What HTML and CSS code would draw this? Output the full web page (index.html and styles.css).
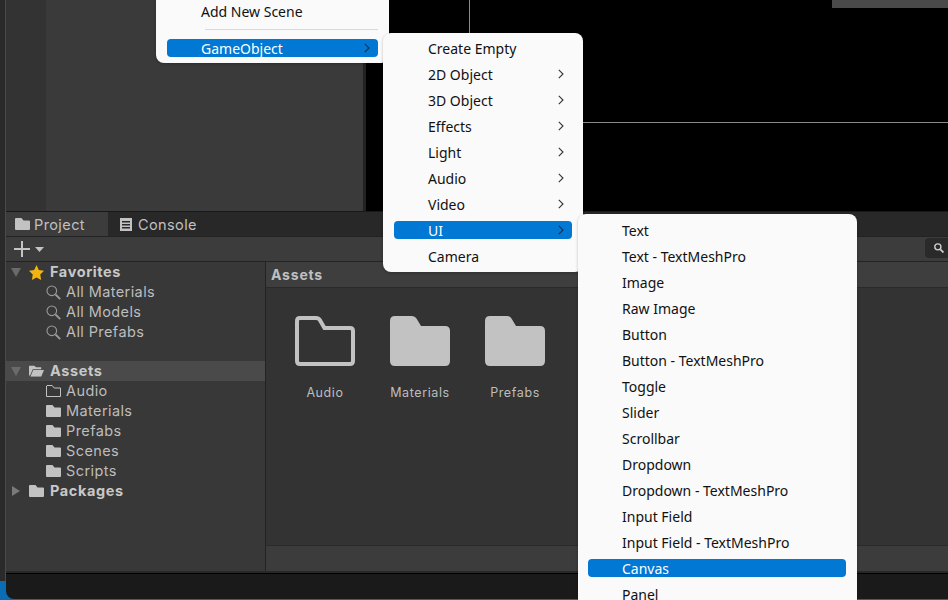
FILE: index.html
```html
<!DOCTYPE html>
<html lang="en">
<head>
  <meta charset="UTF-8">
  <title>Unity Editor - GameObject menu</title>
  <link rel="stylesheet" href="styles.css">
</head>
<body>

  <svg class="defs" width="0" height="0">
    <symbol id="folder" viewBox="0 0 15 12">
      <path d="M1 0H6.5L8.5 2.5H14Q15 2.5 15 3.5V11Q15 12 14 12H1Q0 12 0 11V1Q0 0 1 0Z" fill="#c2c2c2"/>
    </symbol>
    <symbol id="folder-line" viewBox="0 0 15 12">
      <path d="M1 .5H6.2L8.2 3H14.5V11.5H.5V1Z" fill="none" stroke="#c2c2c2"/>
    </symbol>
    <symbol id="folder-open" viewBox="0 0 16 12">
      <path d="M0 1Q0 0 1 0H5.5L7.5 2H13V4H4L1 11L0 10.5Z" fill="#c2c2c2"/>
      <path d="M4.5 5H16L13 12H1.5Z" fill="#c2c2c2"/>
    </symbol>
    <symbol id="glass" viewBox="0 0 15 15">
      <circle cx="5.8" cy="5.8" r="4.8" fill="none" stroke="#9a9a9a" stroke-width="1.1"/>
      <path d="M9.5 9.5L14.2 14.2" stroke="#9a9a9a" stroke-width="1.8"/>
    </symbol>
    <symbol id="chevron" viewBox="0 0 6 10">
      <path d="M.8 .8L5 5L.8 9.2" fill="none" stroke="currentColor" stroke-width="1.1"/>
    </symbol>
    <symbol id="big-folder" viewBox="0 0 60 50">
      <path d="M5 0H22Q25 0 26.5 2.5L31 10H55Q60 10 60 15V45Q60 50 55 50H5Q0 50 0 45V5Q0 0 5 0Z" fill="#c2c2c2"/>
    </symbol>
    <symbol id="big-folder-line" viewBox="0 0 60 50">
      <path d="M5 2H21Q23.5 2 25 4.2L29.5 12H55Q58 12 58 15V45Q58 48 55 48H5Q2 48 2 45V5Q2 2 5 2Z" fill="none" stroke="#c2c2c2" stroke-width="4"/>
    </symbol>
  </svg>

  <div class="screen">
    <div class="edge"></div>

    <div class="editor">
      <div class="top-panels">
        <div class="hierarchy">
          <div class="hierarchy-strip"></div>
        </div>
        <div class="game-view">
          <div class="canvas-outline"></div>
          <div class="game-bar"></div>
        </div>
      </div>

      <div class="tabs">
        <div class="tab tab-active">
          <svg class="tab-icon" width="15" height="12"><use href="#folder"/></svg>
          Project
        </div>
        <div class="tab">
          <svg class="tab-icon" width="12" height="13" viewBox="0 0 12 13">
            <path d="M0 0H12V13H0Z M2 3V4.5H10V3Z M2 6V7.5H10V6Z M2 9V10.5H10V9Z" fill="#c2c2c2" fill-rule="evenodd"/>
          </svg>
          Console
        </div>
      </div>

      <div class="toolbar">
        <svg width="16" height="16" viewBox="0 0 16 16"><path d="M7 0H9V7H16V9H9V16H7V9H0V7H7Z" fill="#c4c4c4"/></svg>
        <svg width="9" height="5" viewBox="0 0 9 5"><path d="M0 0H9L4.5 5Z" fill="#c4c4c4"/></svg>
        <div class="search-btn">
          <svg width="10" height="10" viewBox="0 0 15 15">
            <circle cx="5.8" cy="5.8" r="4.6" fill="none" stroke="#d0d0d0" stroke-width="2"/>
            <path d="M9.5 9.5L14.2 14.2" stroke="#d0d0d0" stroke-width="2.6"/>
          </svg>
        </div>
      </div>

      <div class="browser">
        <div class="tree">
          <div class="tree-row">
            <span class="arrow-down"></span>
            <svg class="root-icon" width="15" height="15" viewBox="0 0 24 24"><path d="M12 0L15.7 7.9L24 9.1L18 15.2L19.4 24L12 19.8L4.6 24L6 15.2L0 9.1L8.3 7.9Z" fill="#f4b40f"/></svg>
            <span class="root-label">Favorites</span>
          </div>
          <div class="tree-row child"><svg class="child-icon" width="15" height="15"><use href="#glass"/></svg>All Materials</div>
          <div class="tree-row child"><svg class="child-icon" width="15" height="15"><use href="#glass"/></svg>All Models</div>
          <div class="tree-row child"><svg class="child-icon" width="15" height="15"><use href="#glass"/></svg>All Prefabs</div>
          <div class="tree-gap"></div>
          <div class="tree-row tree-row-selected">
            <span class="arrow-down"></span>
            <svg class="root-icon" width="15" height="12" viewBox="0 0 16 12"><use href="#folder-open"/></svg>
            <span class="root-label">Assets</span>
          </div>
          <div class="tree-row child"><svg class="child-icon" width="15" height="12"><use href="#folder-line"/></svg>Audio</div>
          <div class="tree-row child"><svg class="child-icon" width="15" height="12"><use href="#folder"/></svg>Materials</div>
          <div class="tree-row child"><svg class="child-icon" width="15" height="12"><use href="#folder"/></svg>Prefabs</div>
          <div class="tree-row child"><svg class="child-icon" width="15" height="12"><use href="#folder"/></svg>Scenes</div>
          <div class="tree-row child"><svg class="child-icon" width="15" height="12"><use href="#folder"/></svg>Scripts</div>
          <div class="tree-row">
            <span class="arrow-right"></span>
            <svg class="root-icon" width="15" height="12"><use href="#folder"/></svg>
            <span class="root-label">Packages</span>
          </div>
        </div>

        <div class="assets">
          <div class="breadcrumb">Assets</div>
          <div class="asset-grid">
            <div class="asset"><svg width="60" height="50"><use href="#big-folder-line"/></svg>Audio</div>
            <div class="asset"><svg width="60" height="50"><use href="#big-folder"/></svg>Materials</div>
            <div class="asset"><svg width="60" height="50"><use href="#big-folder"/></svg>Prefabs</div>
          </div>
          <div class="assets-footer"></div>
        </div>
      </div>

      <div class="status"></div>
    </div>
  </div>

  <!-- context menus -->
  <div class="menu menu-main">
    <div class="item">Add New Scene</div>
    <div class="sep"></div>
    <div class="item item-on">GameObject<svg class="chev" width="6" height="10"><use href="#chevron"/></svg></div>
  </div>

  <div class="menu menu-gameobject">
    <div class="item">Create Empty</div>
    <div class="item">2D Object<svg class="chev" width="6" height="10"><use href="#chevron"/></svg></div>
    <div class="item">3D Object<svg class="chev" width="6" height="10"><use href="#chevron"/></svg></div>
    <div class="item">Effects<svg class="chev" width="6" height="10"><use href="#chevron"/></svg></div>
    <div class="item">Light<svg class="chev" width="6" height="10"><use href="#chevron"/></svg></div>
    <div class="item">Audio<svg class="chev" width="6" height="10"><use href="#chevron"/></svg></div>
    <div class="item">Video<svg class="chev" width="6" height="10"><use href="#chevron"/></svg></div>
    <div class="item item-on">UI<svg class="chev" width="6" height="10"><use href="#chevron"/></svg></div>
    <div class="item">Camera</div>
  </div>

  <div class="menu menu-ui">
    <div class="item">Text</div>
    <div class="item">Text - TextMeshPro</div>
    <div class="item">Image</div>
    <div class="item">Raw Image</div>
    <div class="item">Button</div>
    <div class="item">Button - TextMeshPro</div>
    <div class="item">Toggle</div>
    <div class="item">Slider</div>
    <div class="item">Scrollbar</div>
    <div class="item">Dropdown</div>
    <div class="item">Dropdown - TextMeshPro</div>
    <div class="item">Input Field</div>
    <div class="item">Input Field - TextMeshPro</div>
    <div class="item item-on">Canvas</div>
    <div class="item">Panel</div>
  </div>

</body>
</html>
```

FILE: styles.css
```css
html, body {
  margin: 0;
  height: 100%;
  overflow: hidden;
}

body {
  position: relative;
  font-family: Inter, 'Liberation Sans', sans-serif;
  background: #0a6cb4;
}

.defs {
  position: absolute;
}

.screen {
  display: flex;
  height: 600px;
}

.edge {
  width: 5px;
  height: 581px;
  background: #2a2a2a;
  border-right: 1px solid #4a4a4a;
}

.editor {
  display: flex;
  flex-direction: column;
  flex: 1;
  height: 599px;
  background: #1a1a1a;
  border-bottom-left-radius: 8px;
  overflow: hidden;
}

/* top half */
.top-panels {
  display: flex;
  height: 211px;
  background: #222;
}

.hierarchy {
  width: 357px;
  background: #3a3a3a;
}

.hierarchy-strip {
  width: 40px;
  height: 100%;
  background: #333;
}

.game-view {
  position: relative;
  flex: 1;
  margin-left: 3px;
  background: #000;
}

.canvas-outline {
  position: absolute;
  top: 0;
  left: 103px;
  right: 0;
  height: 122px;
  border-left: 1px solid #8a8a8a;
  border-bottom: 1px solid #8a8a8a;
}

.game-bar {
  position: absolute;
  top: 0;
  right: 0;
  width: 116px;
  height: 8px;
  background: #4a4a4a;
}

/* project window */
.tabs {
  display: flex;
  height: 25px;
  background: #282828;
  border-top: 1px solid #191919;
  box-sizing: border-box;
  color: #c0c0c0;
  font-size: 14.5px;
  letter-spacing: 0.4px;
}

.tab {
  display: flex;
  align-items: center;
  gap: 6px;
  padding: 0 12px;
}

.tab-active {
  width: 102px;
  box-sizing: border-box;
  padding-left: 9px;
  gap: 4px;
  background: #3c3c3c;
}

.toolbar {
  position: relative;
  display: flex;
  align-items: center;
  gap: 5px;
  height: 26px;
  box-sizing: border-box;
  padding-left: 8px;
  background: #3c3c3c;
  border-top: 1px solid #232323;
  border-bottom: 1px solid #232323;
}

.search-btn {
  position: absolute;
  top: 1px;
  right: 0;
  display: flex;
  align-items: center;
  width: 23px;
  height: 20px;
  padding-left: 9px;
  box-sizing: border-box;
  background: #2a2a2a;
  border-radius: 4px 0 0 4px;
}

.browser {
  display: flex;
  height: 309px;
  background: #383838;
}

.tree {
  width: 259px;
  border-right: 1px solid #232323;
  color: #bdbdbd;
  font-size: 14.5px;
  letter-spacing: 0.4px;
}

/* bottom padding lifts the text 1px, icons get it back with margin-top */
.tree-row {
  display: flex;
  align-items: center;
  height: 20px;
  box-sizing: border-box;
  padding-left: 5px;
  padding-bottom: 2px;
}

.tree-row svg,
.tree-row .arrow-down,
.tree-row .arrow-right {
  margin-top: 2px;
}

.tree-row-selected {
  background: #4a4a4a;
}

.tree-gap {
  height: 19px;
}

.child {
  padding-left: 40px;
}

.child-icon {
  margin-right: 5px;
}

.root-icon {
  margin-left: 8px;
  margin-right: 6px;
}

.root-label {
  color: #c8c8c8;
  font-weight: 700;
  letter-spacing: 0.6px;
}

.arrow-down {
  width: 0;
  height: 0;
  border-left: 5px solid transparent;
  border-right: 5px solid transparent;
  border-top: 9px solid #6a6a6a;
}

.arrow-right {
  width: 0;
  height: 0;
  margin-left: 1px;
  margin-right: 1px;
  border-top: 5px solid transparent;
  border-bottom: 5px solid transparent;
  border-left: 8px solid #7a7a7a;
}

.assets {
  display: flex;
  flex-direction: column;
  flex: 1;
  background: #333;
}

.breadcrumb {
  height: 26px;
  box-sizing: border-box;
  padding-left: 5px;
  line-height: 25px;
  background: #3e3e3e;
  border-bottom: 1px solid #2a2a2a;
  color: #c0c0c0;
  font-size: 14px;
  font-weight: 700;
  letter-spacing: 0.8px;
}

.asset-grid {
  display: flex;
  flex: 1;
  gap: 1px;
  padding: 28px 0 0 12px;
}

.asset {
  display: flex;
  flex-direction: column;
  align-items: center;
  gap: 19px;
  width: 94px;
  color: #bdbdbd;
  font-size: 12.5px;
  line-height: 16px;
  letter-spacing: 0.6px;
}

.assets-footer {
  height: 26px;
  box-sizing: border-box;
  background: #3c3c3c;
  border-top: 1px solid #2a2a2a;
}

.status {
  flex: 1;
  border-top: 2px solid #282828;
  box-shadow: inset 0 1px 0 #000;
}

/* context menus, these float over the editor */
.menu {
  position: absolute;
  display: flex;
  flex-direction: column;
  gap: 8px;
  box-sizing: border-box;
  background: #fafafa;
  border-radius: 8px;
  box-shadow: 0 1px 3px rgba(0, 0, 0, 0.25);
  color: #111;
  font-family: 'Noto Sans', 'Open Sans', sans-serif;
  font-size: 14px;
}

.menu-main {
  top: -10px;
  left: 156px;
  width: 233px;
  height: 73px;
  padding: 12px 11px 6px;
  gap: 0;
}

.menu-gameobject {
  top: 33px;
  left: 383px;
  width: 200px;
  height: 239px;
  padding: 6px 11px;
}

.menu-ui {
  top: 214px;
  left: 578px;
  width: 279px;
  height: 400px;
  padding: 7px 11px 0 10px;
}

.item {
  display: flex;
  align-items: center;
  justify-content: space-between;
  flex: none;
  height: 18px;
  box-sizing: border-box;
  padding: 2px 8px 0 34px;
  border-radius: 4px;
  line-height: 16px;
  white-space: nowrap;
}

.item-on {
  background: #0078d4;
  color: #fff;
}

.chev {
  margin-top: -2px;
  color: #333;
}

.item-on .chev {
  color: #14304d;
}

.sep {
  height: 1px;
  margin: 9px 0 9px 38px;
  background: #d9d9d9;
}
```
